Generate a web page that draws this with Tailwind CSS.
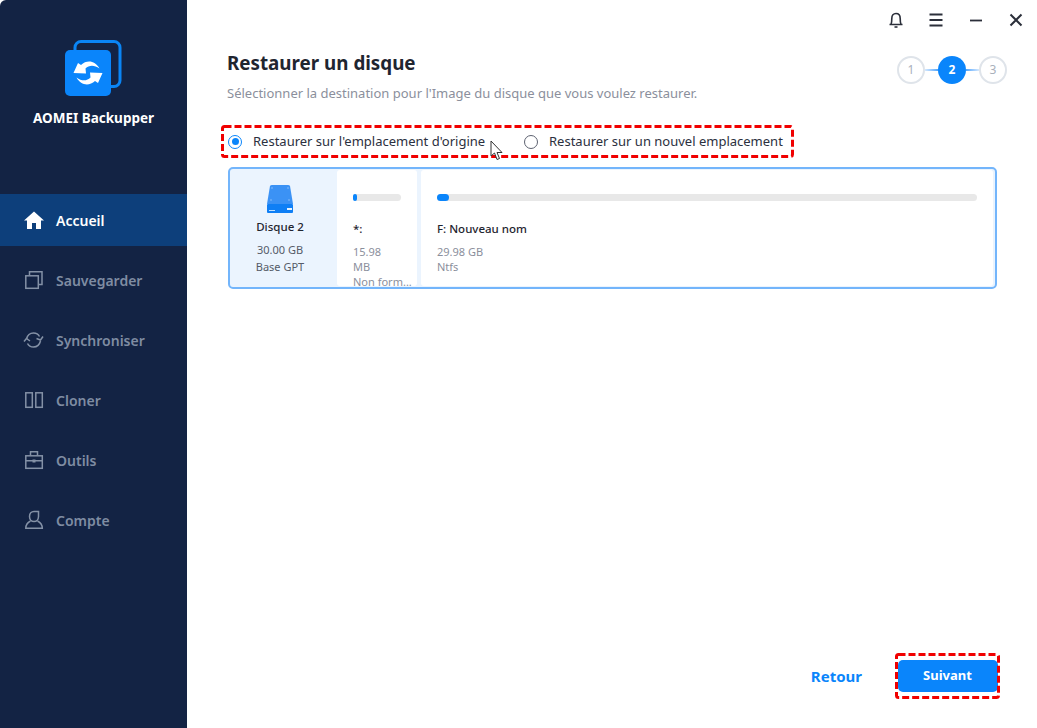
<!DOCTYPE html>
<html><head><meta charset="utf-8"><script src="https://cdn.jsdelivr.net/npm/@tailwindcss/browser@4"></script></head>
<body class="m-0 bg-white">
<div class="relative flex w-[1037px] h-[728px] overflow-hidden bg-white font-['Noto_Sans','Open_Sans',sans-serif]">
  <aside class="w-[187px] h-full shrink-0 bg-[#132344] rounded-tl-[6px] flex flex-col">
    <div class="h-[194px] flex flex-col items-center">
      <svg class="mt-[40px]" width="58" height="57" viewBox="0 0 58 57">
        <rect x="10" y="1.500" width="45" height="45" rx="6" fill="none" stroke="#0a85f5" stroke-width="3"/>
        <rect x="0" y="10" width="46" height="46" rx="5" fill="#0a85fb"/>
        <g transform="translate(0,10)">
          <path d="M8.500 23 L13 13 L16 15 C22 9.500 30 10.500 34.500 18.500 C29 14.500 24 15 20.500 18.500 L21 23.500 Z" fill="#fff"/>
          <path d="M8.500 23 L13 13 L16 15 C22 9.500 30 10.500 34.500 18.500 C29 14.500 24 15 20.500 18.500 L21 23.500 Z" fill="#fff" transform="rotate(180 23 23)"/>
        </g>
      </svg>
      <div class="mt-[12px] text-[13.5px] leading-[18px] font-bold text-white">AOMEI Backupper</div>
    </div>
    <nav class="flex flex-col gap-2 text-[14px] font-semibold text-[#7f8ca2]">
      <div class="h-[52px] flex items-center bg-[#0d3f7b] text-white">
        <svg class="ml-[24px] mr-[12px]" width="20" height="18" viewBox="0 0 20 18"><path d="M10 0.500 L20 9.500 L17 9.500 L17 18 L12 18 L12 12 L8 12 L8 18 L3 18 L3 9.500 L0 9.500 Z" fill="#fff"/></svg>
        <span>Accueil</span>
      </div>
      <div class="h-[52px] flex items-center">
        <svg class="ml-[24px] mr-[12px]" width="20" height="20" viewBox="0 0 20 20" fill="none" stroke="#8491a6" stroke-width="1.500"><rect x="1.800" y="5.800" width="12.500" height="12.500"/><path d="M5.500 5.500 V1.800 H18 V14.500 H15"/></svg>
        <span>Sauvegarder</span>
      </div>
      <div class="h-[52px] flex items-center">
        <svg class="ml-[23px] mr-[12px]" width="21" height="20" viewBox="0 0 21 20" fill="none" stroke="#8491a6" stroke-width="1.500"><path d="M3.500 9 C4.500 5 7.500 3 10.500 3 C13.500 3 15.500 4.500 16.500 6.500"/><path d="M17.500 11 C16.500 15 13.500 17 10.500 17 C7.500 17 5.500 15.500 4.500 13.500"/><path d="M13.500 8.500 L17.500 10 L20 6.500"/><path d="M1 11.500 L3.500 8.500 L7 11"/></svg>
        <span>Synchroniser</span>
      </div>
      <div class="h-[52px] flex items-center">
        <svg class="ml-[24px] mr-[12px]" width="20" height="20" viewBox="0 0 20 20" fill="none" stroke="#8491a6" stroke-width="1.500"><rect x="1.800" y="2.800" width="6.500" height="14.500"/><rect x="11.800" y="2.800" width="6.500" height="14.500"/></svg>
        <span>Cloner</span>
      </div>
      <div class="h-[52px] flex items-center">
        <svg class="ml-[24px] mr-[12px]" width="20" height="20" viewBox="0 0 20 20" fill="none" stroke="#8491a6" stroke-width="1.500"><rect x="1.800" y="5.800" width="16.500" height="12.500"/><path d="M6.500 5.500 V1.800 H13.500 V5.500 M1.800 10.800 H18.300"/><rect x="8.500" y="9.500" width="3" height="3" fill="#8491a6" stroke="none"/></svg>
        <span>Outils</span>
      </div>
      <div class="h-[52px] flex items-center">
        <svg class="ml-[24px] mr-[12px]" width="20" height="20" viewBox="0 0 20 20" fill="none" stroke="#8491a6" stroke-width="1.500"><path d="M5.500 6.500 C5.500 3.500 7.500 1.500 10 1.500 H14.500 V6.500 C14.500 9.500 12.500 11.500 10 11.500 C7.500 11.500 5.500 9.500 5.500 6.500 Z"/><path d="M6.500 11 C3.500 12.500 1.800 14.500 1.800 18.300 H18.300 C18.300 14.500 16.500 12.500 13.500 11"/></svg>
        <span>Compte</span>
      </div>
    </nav>
  </aside>

  <main class="flex-1 flex flex-col min-w-0">
    <div class="h-[40px] flex items-start justify-end pt-[12px] pr-[13px] gap-[24px] text-[#2b2f3a]">
      <svg width="16" height="16" viewBox="0 0 16 16" fill="none" stroke="#2b2f3a" stroke-width="1.600"><path d="M1.500 12.500 H14.500 M3 12.500 C3.600 11 3.800 10 3.800 6.500 C3.800 3.500 5.500 1.500 8 1.500 C10.500 1.500 12.200 3.500 12.200 6.500 C12.200 10 12.400 11 13 12.500"/><path d="M6.500 15 H9.500"/></svg>
      <svg width="16" height="16" viewBox="0 0 16 16" fill="none" stroke="#2b2f3a" stroke-width="1.800"><path d="M1.500 2.500 H14.500 M1.500 8 H14.500 M1.500 13.500 H14.500"/></svg>
      <svg width="16" height="16" viewBox="0 0 16 16" fill="none" stroke="#2b2f3a" stroke-width="1.800"><path d="M2 8.500 H14"/></svg>
      <svg width="16" height="16" viewBox="0 0 16 16" fill="none" stroke="#2b2f3a" stroke-width="2"><path d="M2.500 2.500 L13.500 13.500 M13.500 2.500 L2.500 13.500"/></svg>
    </div>

    <div class="pl-[40px] pr-[30px] flex justify-between">
      <div>
        <h1 class="mt-[10px] text-[18.800px] leading-[26px] font-bold text-[#1f2530]">Restaurer un disque</h1>
        <p class="mt-[8px] text-[13px] leading-[18px] text-[#8b8f9c]">Sélectionner la destination pour l'Image du disque que vous voulez restaurer.</p>
      </div>
      <div class="mt-[16px] flex items-center h-[28px] text-[12px]">
        <span class="w-[28px] h-[28px] rounded-full border-2 border-[#dfe4ea] flex items-center justify-center text-[#a9b0bb]">1</span>
        <span class="w-[13px] h-[2px] bg-linear-to-r from-[#d5e8fd] to-[#4fa5fb]"></span>
        <span class="w-[28px] h-[28px] rounded-full bg-[#0a85fb] flex items-center justify-center text-white font-bold">2</span>
        <span class="w-[13px] h-[2px] bg-linear-to-r from-[#4fa5fb] to-[#d5e8fd]"></span>
        <span class="w-[28px] h-[28px] rounded-full border-2 border-[#dfe4ea] flex items-center justify-center text-[#a9b0bb]">3</span>
      </div>
    </div>

    <div class="relative mt-[23px] ml-[34px] w-[573px] h-[33px] flex items-center text-[13px] text-[#2b3040]">
      <svg class="absolute inset-0" width="573" height="33"><rect x="1.500" y="1.500" width="570" height="30" rx="2" fill="none" stroke="#f00000" stroke-width="3" stroke-dasharray="7 3"/></svg>
      <span class="ml-[7px] w-[14px] h-[14px] rounded-full border-[1.500px] border-[#0a85fb] flex items-center justify-center"><span class="w-[7px] h-[7px] rounded-full bg-[#0a85fb]"></span></span>
      <span class="ml-[11px] w-[230px] whitespace-nowrap">Restaurer sur l'emplacement d'origine</span>
      <span class="ml-[41px] w-[14px] h-[14px] rounded-full border-[1.500px] border-[#5d6270]"></span>
      <span class="ml-[11px] whitespace-nowrap">Restaurer sur un nouvel emplacement</span>
    </div>

    <div class="mt-[9px] ml-[41px] w-[769px] h-[122px] box-border border-[2px] border-[#73b5fb] rounded-[5px] bg-[#ebf4fe] flex">
      <div class="w-[107px] shrink-0 flex flex-col items-center pt-[15px] pr-[7px]">
        <svg width="32" height="32" viewBox="0 0 32 32"><path d="M6 2 Q6.500 1 8 1 H24 Q25.500 1 26 2 L29 20 H3 Z" fill="#3b92f5"/><rect x="3" y="20" width="26" height="9" rx="1" fill="#0f7ff5"/><rect x="5" y="26" width="6" height="1" fill="#bfe0ff"/><rect x="23" y="24" width="5" height="2" fill="#e6f3ff"/><circle cx="8" cy="4" r=".7" fill="#9dcbfb"/><circle cx="24" cy="4" r=".7" fill="#9dcbfb"/><circle cx="7" cy="16" r=".7" fill="#9dcbfb"/><circle cx="25" cy="16" r=".7" fill="#9dcbfb"/></svg>
        <div class="mt-[2px] text-[11.500px] leading-[18px] font-medium text-[#1f2530]">Disque 2</div>
        <div class="mt-[5px] text-[11px] leading-[17px] text-[#555b68]">30.00 GB</div>
        <div class="text-[11px] leading-[17px] text-[#555b68]">Base GPT</div>
      </div>
      <div class="w-[80px] shrink-0 bg-white my-[1px] rounded-[3px] px-[16px] pt-[24px]">
        <div class="h-[7px] rounded-full bg-[#e8e8e8]"><div class="w-[4px] h-[7px] rounded-full bg-[#0a85fb]"></div></div>
        <div class="mt-[19px] text-[11.500px] leading-[18px] font-medium text-[#1f2530]">*:</div>
        <div class="mt-[6px] text-[11px] leading-[15px] text-[#8b8f9c]">15.98 MB</div>
        <div class="text-[11px] leading-[15px] text-[#8b8f9c] whitespace-nowrap">Non form...</div>
      </div>
      <div class="flex-1 bg-white ml-[4px] mr-[2px] my-[1px] rounded-[3px] px-[16px] pt-[24px]">
        <div class="h-[7px] rounded-full bg-[#e8e8e8]"><div class="w-[12px] h-[7px] rounded-full bg-[#0a85fb]"></div></div>
        <div class="mt-[19px] text-[11.500px] leading-[18px] font-medium text-[#1f2530]">F: Nouveau nom</div>
        <div class="mt-[6px] text-[11px] leading-[15px] text-[#8b8f9c]">29.98 GB</div>
        <div class="text-[11px] leading-[15px] text-[#8b8f9c]">Ntfs</div>
      </div>
    </div>

    <div class="mt-auto mb-[29px] mr-[37px] flex items-center justify-end">
      <span class="mr-[33px] text-[15px] font-bold text-[#0a85fb]">Retour</span>
      <div class="relative w-[105px] h-[46px] flex items-center justify-center">
        <svg class="absolute inset-0" width="105" height="46"><rect x="1.500" y="1.500" width="102" height="43" rx="2" fill="none" stroke="#f00000" stroke-width="3" stroke-dasharray="7 3"/></svg>
        <button class="w-[100px] h-[32px] rounded-[5px] bg-[#0a85fb] text-white text-[13px] font-bold">Suivant</button>
      </div>
    </div>
  </main>

  <svg class="absolute left-[490px] top-[140px]" width="14" height="22" viewBox="0 0 14 22"><path d="M1 1 V16 L4.500 13 L7 19.500 L9.500 18.500 L7 12.500 L12 12.500 Z" fill="#fff" stroke="#333" stroke-width="1"/></svg>
</div>
</body></html>
